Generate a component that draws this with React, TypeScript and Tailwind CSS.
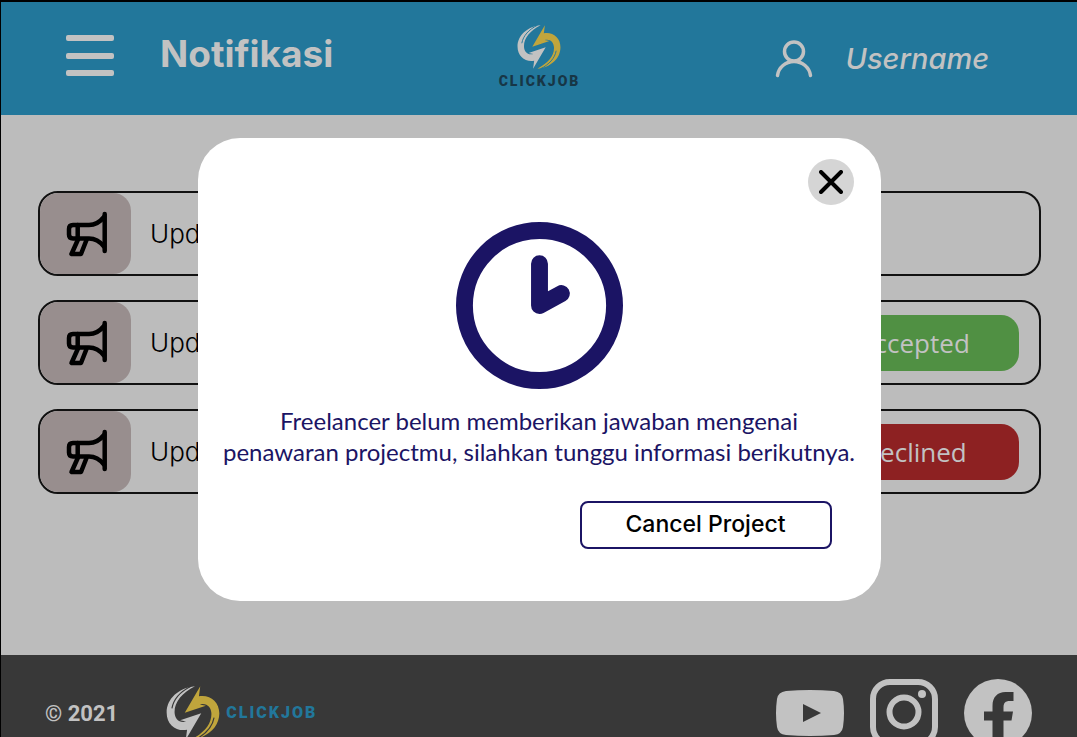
import React from "react";

const halfMark =
  "M104 1 57 81l64-21-18-4c20-6 35 8 35 29 0 32-24 58-62 78 50-5 86-38 86-80 0-36-29-58-62-52z";

function Mark({ className, gapClass }: { className: string; gapClass: string }) {
  return (
    <svg viewBox="0 0 164 164" className={className} aria-hidden="true">
      <g>
        <path fill="#c0a53c" d={halfMark} />
        <path d="M146 96c-5 28-26 51-58 67" className={gapClass} fill="none" strokeWidth="3.500" />
      </g>
      <g transform="rotate(180 82 82)">
        <path fill="#c2c2c2" d={halfMark} />
        <path d="M146 96c-5 28-26 51-58 67" className={gapClass} fill="none" strokeWidth="3.500" />
      </g>
    </svg>
  );
}

function Megaphone() {
  return (
    <svg viewBox="0 0 42 46" className="h-[46px] w-[42px]" aria-hidden="true">
      <g className="fill-none stroke-black" strokeWidth="4.5" strokeLinecap="round" strokeLinejoin="round">
        <path d="M38.700 3v37" />
        <path d="M38 6c-4 5-9 8-15 8H7c-2.500 0-4 1.500-4 4v5.500c0 2.500 1.500 4 4 4h16c6 0 11 3 15 8" />
        <path d="M11.700 14v13.500M12 28.500 5.500 43h9.500l5.500-14" />
      </g>
    </svg>
  );
}

type Status = "accepted" | "declined";

function Notification({ status }: { status?: Status }) {
  return (
    <li className="flex h-[85px] items-center justify-between overflow-hidden rounded-[20px] border-2 border-[#111] pr-5">
      <div className="flex h-full items-center gap-[19px]">
        <span className="flex h-full w-[91px] items-center justify-center rounded-[18px] bg-[#988e8e] pr-0.5 pl-1">
          <Megaphone />
        </span>
        <span className="font-['Inter',sans-serif] text-[26px] font-light text-black">Upd</span>
      </div>
      {status === "accepted" && (
        <button className="h-14 w-[210px] rounded-[18px] bg-[#509043] pt-0.5 font-['Open_Sans',sans-serif] text-[26px] text-[#c2c2c2]">
          Accepted
        </button>
      )}
      {status === "declined" && (
        <button className="h-14 w-[210px] rounded-[18px] bg-[#8d2122] pt-0.5 font-['Open_Sans',sans-serif] text-[26px] text-[#c2c2c2]">
          Declined
        </button>
      )}
    </li>
  );
}

export default function App() {
  return (
    <div className="relative flex h-screen flex-col overflow-hidden border-l border-t-2 border-black bg-[#bcbcbc] font-['Inter',sans-serif]">
      <header className="grid h-[113px] shrink-0 grid-cols-3 items-center bg-[#22779b] pl-[65px] pr-[88px]">
        <div className="flex items-center gap-[46px] pb-1.5">
          <button aria-label="Menu" className="flex h-[41px] w-12 flex-col justify-between">
            <span className="h-1.5 w-full rounded-[2px] bg-[#c2c2c2]" />
            <span className="h-1.5 w-full rounded-[2px] bg-[#c2c2c2]" />
            <span className="h-1.5 w-full rounded-[2px] bg-[#c2c2c2]" />
          </button>
          <h1 className="pb-1 text-[37px] font-bold text-[#c2c2c2]">Notifikasi</h1>
        </div>
        <a href="#" className="flex flex-col items-center gap-1 pb-1 pl-6">
          <Mark className="h-11 w-11" gapClass="stroke-[#22779b]" />
          <span className="font-['Roboto',sans-serif] text-[14px] leading-4 font-black tracking-[2px] text-[#173646]">CLICKJOB</span>
        </a>
        <a href="#" className="flex items-center justify-end gap-8 text-[#c2c2c2]">
          <svg viewBox="0 0 38 38" className="h-[38px] w-[38px] fill-none stroke-current" strokeWidth="3.500" strokeLinecap="round" aria-hidden="true">
            <circle cx="19" cy="11.500" r="9.500" />
            <path d="M2.500 35.500c1-8 8-14 16.500-14s15.500 6 16.500 14" />
          </svg>
          <span className="text-[29px] font-medium italic">Username</span>
        </a>
      </header>

      <main className="h-[540px] shrink-0 pl-[37px] pr-9 pt-[76px]">
        <ul className="flex flex-col gap-6">
          <Notification />
          <Notification status="accepted" />
          <Notification status="declined" />
        </ul>
      </main>

      <footer className="flex h-[116px] shrink-0 items-center justify-between bg-[#383838] pl-11 pr-[45px]">
        <div className="flex items-center">
          <span className="font-['Roboto',sans-serif] text-[22px] font-bold text-[#c2c2c2]">© 2021</span>
          <a href="#" className="ml-12 flex items-center gap-1.5">
            <Mark className="h-[54px] w-[54px]" gapClass="stroke-[#383838]" />
            <span className="font-['Roboto',sans-serif] text-[16px] font-black tracking-[2px] text-[#22779b]">CLICKJOB</span>
          </a>
        </div>
        <div className="flex items-center gap-[26px] text-[#c2c2c2]">
          <a href="#" aria-label="YouTube">
            <svg viewBox="0 0 68 46" className="h-[46px] w-[68px] fill-current">
              <path fillRule="evenodd" d="M10 1Q34-1 58 1q8 1 9 8 2 14 0 28-1 7-9 8-24 2-48 0-8-1-9-8-2-14 0-28 1-7 9-8zm17 13v18l18-9z" />
            </svg>
          </a>
          <a href="#" aria-label="Instagram">
            <svg viewBox="0 0 68 68" className="h-[68px] w-[68px]">
              <rect x="3" y="3" width="62" height="62" rx="17" className="fill-none stroke-current" strokeWidth="6" />
              <circle cx="34" cy="33" r="14.500" className="fill-none stroke-current" strokeWidth="6" />
              <circle cx="52" cy="15" r="4" className="fill-current" />
            </svg>
          </a>
          <a href="#" aria-label="Facebook">
            <svg viewBox="0 0 68 68" className="h-[68px] w-[68px]">
              <circle cx="34" cy="34" r="34" className="fill-current" />
              <path fill="#383838" d="M28.500 68V41.500H20v-9h8.500V27c0-9 5-14 13-14h8v9h-4c-4 0-6 2-6 6v4.500h9.500l-1.500 9h-8V68z" />
            </svg>
          </a>
        </div>
      </footer>

      <div className="absolute inset-0 flex items-center justify-center">
        <section role="dialog" aria-modal="true" aria-label="Project status" className="relative flex h-[463px] w-[683px] flex-col items-center rounded-[42px] bg-white pt-[84px]">
          <button aria-label="Close" className="absolute right-[27px] top-[21px] flex h-[46px] w-[46px] items-center justify-center rounded-full bg-[#d5d5d5]">
            <svg viewBox="0 0 24 24" className="h-6 w-6 fill-none stroke-black" strokeWidth="4" strokeLinecap="round" aria-hidden="true">
              <path d="M2 2l20 20M22 2 2 22" />
            </svg>
          </button>
          <svg viewBox="0 0 168 168" className="h-[167px] w-[167px] shrink-0 fill-none stroke-[#1b1464]" strokeWidth="17" strokeLinecap="round" strokeLinejoin="round" aria-hidden="true">
            <circle cx="84" cy="84" r="75.500" />
            <path d="M84 42v42l22-12" />
          </svg>
          <p className="mt-4 text-center font-['Lato',sans-serif] text-[24px] leading-[31px] whitespace-nowrap text-[#1b1464]">
            Freelancer belum memberikan jawaban mengenai
            <br />
            penawaran projectmu, silahkan tunggu informasi berikutnya.
          </p>
          <button className="mr-[49px] mt-[34px] h-12 w-[252px] self-end rounded-lg border-2 border-[#1b1464] pb-0.5 font-['Inter',sans-serif] text-[23px] font-medium text-black">
            Cancel Project
          </button>
        </section>
      </div>
    </div>
  );
}
